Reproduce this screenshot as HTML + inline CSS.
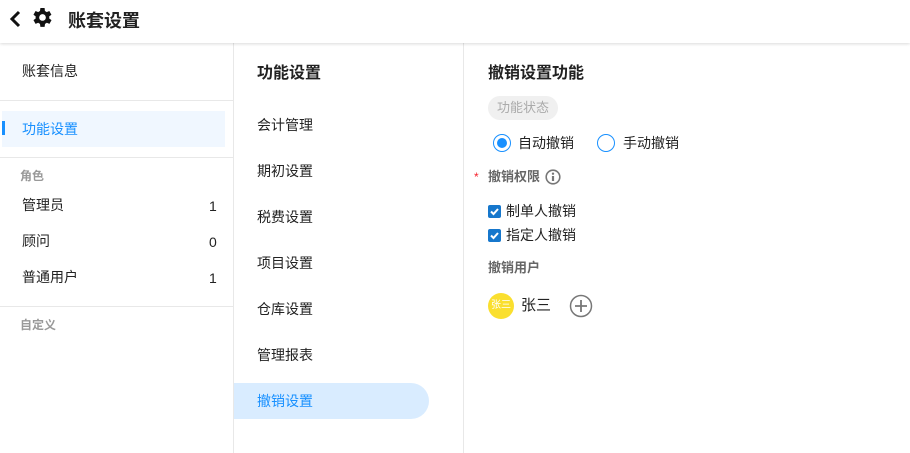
<!DOCTYPE html>
<html><head><meta charset="utf-8"><style>
*{margin:0;padding:0;box-sizing:border-box}
body{width:910px;height:453px;overflow:hidden;background:#fff;font-family:"Liberation Sans","Noto Sans CJK SC",sans-serif;color:#222;font-size:14px;position:relative}
.a{position:absolute;white-space:nowrap}
.hdr{position:absolute;left:0;top:0;width:910px;height:43px;background:#fff;box-shadow:0 1px 3px rgba(0,0,0,.15);z-index:2}
.line{position:absolute;background:#e8e8e8}
.g{color:#999;font-size:12px;font-weight:bold}
.t{line-height:20px;transform:translateY(-10px)}
</style></head><body>
<div class="hdr">
<svg class="a" style="left:9px;top:10px" width="14" height="18" viewBox="0 0 14 18"><path d="M10 2 L3 9 L10 16" stroke="#111" stroke-width="3" fill="none"/></svg>
<svg class="a" style="left:32px;top:8px" width="21" height="21" viewBox="3 3 20 20"><path fill="#111" fill-rule="evenodd" d="M19.4 13a7.5 7.5 0 0 0 0-2l2.1-1.6-2-3.5-2.5 1a7.6 7.6 0 0 0-1.7-1L15 3h-4l-.4 2.9a7.6 7.6 0 0 0-1.7 1l-2.5-1-2 3.5L6.5 11a7.5 7.5 0 0 0 0 2l-2.1 1.6 2 3.5 2.5-1a7.6 7.6 0 0 0 1.700 1L11 21h4l.4-2.9a7.6 7.6 0 0 0 1.7-1l2.5 1 2-3.5zM13 15.2A3.2 3.2 0 1 1 13 8.8a3.2 3.2 0 0 1 0 6.4z"/></svg>
<div class="a" style="left:68px;top:7px;font-size:18px;font-weight:bold;color:#222">账套设置</div>
</div>
<div class="line" style="left:233px;top:43px;width:1px;height:410px"></div>
<div class="line" style="left:463px;top:43px;width:1px;height:410px"></div>

<div class="a t" style="left:22px;top:71px">账套信息</div>
<div class="line" style="left:0;top:100px;width:233px;height:1px"></div>
<div class="a" style="left:2px;top:111px;width:223px;height:36px;background:#f0f7ff"></div>
<div class="a" style="left:2px;top:121px;width:3px;height:14px;background:#1890ff"></div>
<div class="a t" style="left:22px;top:129px;color:#1890ff">功能设置</div>
<div class="line" style="left:0;top:157px;width:233px;height:1px"></div>
<div class="a t g" style="left:20px;top:176px">角色</div>
<div class="a t" style="left:22px;top:205px">管理员</div><div class="a t" style="left:209px;top:206px">1</div>
<div class="a t" style="left:22px;top:241px">顾问</div><div class="a t" style="left:209px;top:242px">0</div>
<div class="a t" style="left:22px;top:277px">普通用户</div><div class="a t" style="left:209px;top:278px">1</div>
<div class="line" style="left:0;top:306px;width:233px;height:1px"></div>
<div class="a t g" style="left:20px;top:325px">自定义</div>

<div class="a t" style="left:257px;top:74px;font-size:16px;font-weight:bold">功能设置</div>
<div class="a t" style="left:257px;top:125px">会计管理</div>
<div class="a t" style="left:257px;top:171px">期初设置</div>
<div class="a t" style="left:257px;top:217px">税费设置</div>
<div class="a t" style="left:257px;top:263px">项目设置</div>
<div class="a t" style="left:257px;top:309px">仓库设置</div>
<div class="a t" style="left:257px;top:355px">管理报表</div>
<div class="a" style="left:234px;top:383px;width:195px;height:36px;background:#d9ecff;border-radius:0 18px 18px 0"></div>
<div class="a t" style="left:257px;top:401px;color:#1890ff">撤销设置</div>

<div class="a t" style="left:488px;top:74px;font-size:16px;font-weight:bold">撤销设置功能</div>
<div class="a" style="left:488px;top:96px;width:70px;height:24px;background:#f0f0f0;border-radius:12px;color:#aaa;font-size:13px;line-height:24px;text-align:center">功能状态</div>
<div class="a" style="left:493px;top:134px;width:18px;height:18px;border:1px solid #1890ff;border-radius:50%"><div style="margin:3px;width:10px;height:10px;background:#1890ff;border-radius:50%"></div></div>
<div class="a t" style="left:518px;top:143px">自动撤销</div>
<div class="a" style="left:597px;top:134px;width:18px;height:18px;border:1px solid #1890ff;border-radius:50%"></div>
<div class="a t" style="left:623px;top:143px">手动撤销</div>
<div class="a t" style="left:474px;top:177px;color:#f5222d;font-size:12px">*</div>
<div class="a t" style="left:488px;top:177px;color:#666;font-weight:bold;font-size:13px">撤销权限</div>
<svg class="a" style="left:545px;top:169px" width="16" height="16"><circle cx="8" cy="8" r="6.8" stroke="#777" stroke-width="1.6" fill="none"/><path d="M8 7v5" stroke="#777" stroke-width="2.2"/><circle cx="8" cy="4.7" r="1.2" fill="#777"/></svg>
<svg class="a" style="left:488px;top:205px" width="13" height="13"><rect width="13" height="13" rx="2" fill="#1677cc"/><path d="M3 6.5l2.5 2.5 4.5-5" stroke="#fff" stroke-width="2" fill="none"/></svg>
<div class="a t" style="left:506px;top:211px">制单人撤销</div>
<svg class="a" style="left:488px;top:229px" width="13" height="13"><rect width="13" height="13" rx="2" fill="#1677cc"/><path d="M3 6.5l2.5 2.5 4.5-5" stroke="#fff" stroke-width="2" fill="none"/></svg>
<div class="a t" style="left:506px;top:235px">指定人撤销</div>
<div class="a t" style="left:488px;top:268px;color:#666;font-weight:bold;font-size:13px">撤销用户</div>
<div class="a" style="left:488px;top:293px;width:26px;height:26px;border-radius:50%;background:#fadf2f;color:#fff;font-size:10px;line-height:26px;text-align:center">张三</div>
<div class="a t" style="left:521px;top:306px;font-size:15px">张三</div>
<svg class="a" style="left:569px;top:294px" width="24" height="24"><circle cx="12" cy="12" r="10.5" stroke="#777" stroke-width="1.5" fill="none"/><path d="M12 6v12M6 12h12" stroke="#777" stroke-width="1.8"/></svg>
</body></html>
